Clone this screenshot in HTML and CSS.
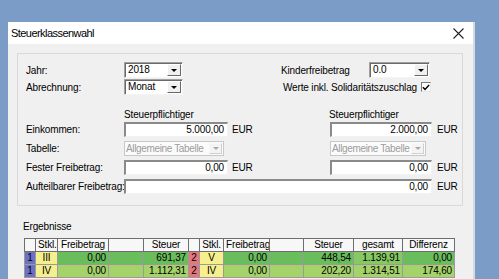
FILE: index.html
```html
<!DOCTYPE html>
<html lang="de">
<head>
<meta charset="utf-8">
<title>Steuerklassenwahl</title>
<link rel="stylesheet" href="styles.css">
</head>
<body>
<div class="window">
  <div class="titlebar">
    <span class="title">Steuerklassenwahl</span>
    <svg class="close" width="11" height="11" viewBox="0 0 11 11"><path d="M0.5 0.5 L10.5 10.5 M10.5 0.5 L0.5 10.5" stroke="#222" stroke-width="1.1" fill="none"/></svg>
  </div>
  <div class="client">
    <div class="group">
      <div class="row top">
        <span class="lbl">Jahr:</span>
        <div class="combo small"><span class="val">2018</span><span class="btn"><i class="arrow"></i></span></div>
        <span class="kfb">Kinderfreibetrag</span>
        <div class="combo kcombo"><span class="val">0.0</span><span class="btn"><i class="arrow"></i></span></div>
      </div>
      <div class="row top">
        <span class="lbl">Abrechnung:</span>
        <div class="combo small"><span class="val">Monat</span><span class="btn"><i class="arrow"></i></span></div>
        <span class="soli">Werte inkl. Solidaritätszuschlag</span>
        <span class="check"><svg width="9" height="9" viewBox="0 0 9 9"><path d="M1 4.2 L3.4 6.6 L8 1.6" stroke="#000" stroke-width="1.6" fill="none"/></svg></span>
      </div>
      <div class="row head">
        <span class="lbl"></span>
        <span class="colhead first">Steuerpflichtiger</span>
        <span class="colhead">Steuerpflichtiger</span>
      </div>
      <div class="row field">
        <span class="lbl">Einkommen:</span>
        <span class="input w1">5.000,00</span>
        <span class="unit u1">EUR</span>
        <span class="input w2">2.000,00</span>
        <span class="unit u2">EUR</span>
      </div>
      <div class="row field">
        <span class="lbl">Tabelle:</span>
        <div class="combo disabled d1"><span class="val">Allgemeine Tabelle</span><span class="btn"><i class="arrow"></i></span></div>
        <span class="gap1"></span>
        <div class="combo disabled d2"><span class="val">Allgemeine Tabelle</span><span class="btn"><i class="arrow"></i></span></div>
      </div>
      <div class="row field">
        <span class="lbl">Fester Freibetrag:</span>
        <span class="input w1">0,00</span>
        <span class="unit u1">EUR</span>
        <span class="input w2">0,00</span>
        <span class="unit u2">EUR</span>
      </div>
      <div class="row field">
        <span class="lbl">Aufteilbarer Freibetrag:</span>
        <span class="input wide">0,00</span>
        <span class="unit u2">EUR</span>
      </div>
    </div>
    <div class="reslabel">Ergebnisse</div>
    <table class="results">
      <colgroup>
        <col style="width:11px"><col style="width:22px"><col style="width:51px"><col style="width:35px"><col style="width:45px"><col style="width:11px"><col style="width:24px"><col style="width:46px"><col style="width:34px"><col style="width:50px"><col style="width:49px"><col style="width:52px">
      </colgroup>
      <tr class="hdr">
        <td></td><td>Stkl.</td><td>Freibetrag</td><td></td><td>Steuer</td><td></td><td>Stkl.</td><td>Freibetrag</td><td></td><td>Steuer</td><td>gesamt</td><td>Differenz</td>
      </tr>
      <tr class="r1">
        <td class="p1">1</td><td class="st">III</td><td class="n">0,00</td><td class="n"></td><td class="n">691,37</td><td class="p2">2</td><td class="st">V</td><td class="n">0,00</td><td class="n"></td><td class="n">448,54</td><td class="n mid">1.139,91</td><td class="n">0,00</td>
      </tr>
      <tr class="r2">
        <td class="p1">1</td><td class="st">IV</td><td class="n">0,00</td><td class="n"></td><td class="n">1.112,31</td><td class="p2">2</td><td class="st">IV</td><td class="n">0,00</td><td class="n"></td><td class="n">202,20</td><td class="n">1.314,51</td><td class="n">174,60</td>
      </tr>
    </table>
  </div>
</div>
</body>
</html>
```
FILE: styles.css
```css
html, body {
  margin: 0;
  padding: 0;
}
body {
  width: 499px;
  height: 279px;
  overflow: hidden;
  background: #7b9cc6;
  font-family: "Liberation Sans", Arial, sans-serif;
  font-size: 10px;
  letter-spacing: -0.15px;
  color: #000;
}
.window {
  margin: 22px 0 0 8px;
  width: 465px;
  height: 300px;
  background: #f0f0f0;
  border-right: 2px solid #d3dce6;
}
.titlebar {
  height: 22px;
  background: #fff;
  display: flex;
  align-items: center;
  padding-left: 3px;
}
.title {
  font-size: 11px;
  letter-spacing: -0.55px;
  color: #000;
}
.close {
  margin-left: auto;
  margin-right: 9px;
}
.client {
  padding: 9px 10px 0 9px;
}
.group {
  box-sizing: border-box;
  height: 153px;
  border: 1px solid #d9d9d9;
  padding: 8px 0 0 8px;
}
.row {
  display: flex;
  align-items: center;
  white-space: nowrap;
}
.row.top {
  height: 16px;
  margin-bottom: 1px;
}
.row.head {
  height: 14px;
  margin-top: 12px;
  align-items: flex-end;
}
.row.field {
  height: 15px;
  margin-top: 4px;
}
.row.head + .row.field {
  margin-top: 1px;
}
.lbl {
  width: 98px;
  flex: none;
}
.kfb {
  margin-left: 98px;
  width: 88px;
  flex: none;
}
.soli {
  margin-left: 100px;
  width: 138px;
  flex: none;
}
.colhead {
  flex: none;
  line-height: 12px;
}
.colhead.first {
  width: 205px;
}
.check {
  box-sizing: border-box;
  width: 10px;
  height: 10px;
  background: #fff;
  border: 1px solid;
  border-color: #7a7a7a #e6e6e6 #e6e6e6 #7a7a7a;
  display: flex;
  align-items: center;
  justify-content: center;
  flex: none;
}
.check svg {
  display: block;
}
.combo {
  box-sizing: border-box;
  height: 16px;
  background: #fff;
  border: 1px solid;
  border-color: #a0a0a0 #f4f4f4 #f4f4f4 #a0a0a0;
  box-shadow: inset 1px 1px 0 #696969;
  display: flex;
  align-items: stretch;
  flex: none;
}
.combo .val {
  flex: 1;
  min-width: 0;
  padding-left: 3px;
  line-height: 14px;
  overflow: hidden;
}
.combo .btn {
  box-sizing: border-box;
  width: 14px;
  flex: none;
  margin: 1px 1px 1px 0;
  background: #f0f0f0;
  border: 1px solid;
  border-color: #fff #696969 #696969 #fff;
  display: flex;
  align-items: center;
  justify-content: center;
}
.arrow {
  width: 0;
  height: 0;
  border-left: 3px solid transparent;
  border-right: 3px solid transparent;
  border-top: 3px solid #000;
}
.combo.small {
  width: 59px;
}
.combo.kcombo {
  width: 61px;
}
.combo.disabled {
  height: 15px;
  background: #fbfbfb;
  border-color: #c8c8c8;
  box-shadow: none;
  color: #9c9c9c;
}
.combo.disabled .val {
  line-height: 13px;
  padding-left: 1px;
  letter-spacing: -0.35px;
}
.combo.disabled .btn {
  width: 13px;
  border-color: #f8f8f8 #cfcfcf #cfcfcf #f8f8f8;
  background: #f4f4f4;
}
.combo.disabled .arrow {
  border-top-color: #a8a8a8;
}
.combo.d1 {
  width: 100px;
}
.combo.d2 {
  width: 96px;
}
.gap1 {
  width: 106px;
  flex: none;
}
.input {
  box-sizing: border-box;
  height: 15px;
  background: #fff;
  border-top: 2px solid #8a8a8a;
  border-left: 2px solid #8a8a8a;
  border-right: 1px solid #f2f2f2;
  border-bottom: 1px solid #f2f2f2;
  text-align: right;
  padding-right: 3px;
  line-height: 12px;
  flex: none;
}
.input.w1 {
  width: 104px;
}
.input.w2 {
  width: 102px;
}
.input.wide {
  width: 308px;
}
.unit {
  flex: none;
}
.unit.u1 {
  width: 98px;
  padding-left: 4px;
}
.unit.u2 {
  padding-left: 5px;
}
.reslabel {
  margin: 15px 0 0 6px;
  line-height: 12px;
}
.results {
  margin: 5px 0 0 7px;
  border-collapse: collapse;
  table-layout: fixed;
  width: 430px;
  border-top: 1px solid #5a5a5a;
  border-left: 1px solid #5a5a5a;
}
.results td {
  height: 12px;
  padding: 0 2px;
  line-height: 12px;
  border: 1px solid #9a9a9a;
  white-space: nowrap;
  overflow: hidden;
}
.results .hdr td {
  background: #f7f7f7;
  border-color: #6e6e6e;
  text-align: center;
}
.results td.p1 {
  background: #6c70c4;
  text-align: center;
}
.results td.p2 {
  background: #e6767d;
  text-align: center;
}
.results td.st {
  background: #f6ef8d;
  text-align: center;
}
.results td.n {
  text-align: right;
}
.results .r1 td.n {
  background: #6abd5c;
}
.results .r1 td.n.mid {
  background: #86c864;
}
.results .r2 td.n {
  background: #a4d36a;
}
```
